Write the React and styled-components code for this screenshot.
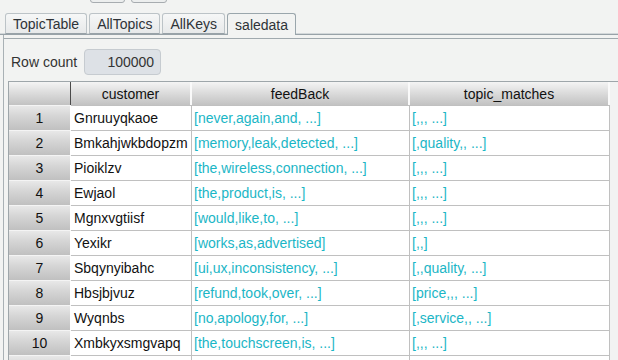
import styled, { createGlobalStyle } from "styled-components"

const GlobalStyle = createGlobalStyle`
  html, body {
    margin: 0;
    background: #f2f3f2;
    font-family: "Liberation Sans", Arial, sans-serif;
    overflow: hidden;
  }
`

const ROWS = [
  ["Gnruuyqkaoe", "[never,again,and, ...]", "[,,, ...]"],
  ["Bmkahjwkbdopzm", "[memory,leak,detected, ...]", "[,quality,, ...]"],
  ["Pioiklzv", "[the,wireless,connection, ...]", "[,,, ...]"],
  ["Ewjaol", "[the,product,is, ...]", "[,,, ...]"],
  ["Mgnxvgtiisf", "[would,like,to, ...]", "[,,, ...]"],
  ["Yexikr", "[works,as,advertised]", "[,,]"],
  ["Sbqynyibahc", "[ui,ux,inconsistency, ...]", "[,,quality, ...]"],
  ["Hbsjbjvuz", "[refund,took,over, ...]", "[price,,, ...]"],
  ["Wyqnbs", "[no,apology,for, ...]", "[,service,, ...]"],
  ["Xmbkyxsmgvapq", "[the,touchscreen,is, ...]", "[,,, ...]"],
]

const TABS = ["TopicTable", "AllTopics", "AllKeys", "saledata"]

const Page = styled.div`
  width: 618px;
  height: 360px;
  overflow: hidden;
  background: #f2f3f2;
`

const Toolbar = styled.div`
  height: 3px;
  overflow: hidden;
  display: flex;
  align-items: flex-end;
  gap: 6px;
  padding-left: 90px;
`

const ToolButton = styled.div`
  flex: none;
  width: ${(p) => p.$w}px;
  height: 20px;
  box-sizing: border-box;
  border: 1px solid #a7acb0;
  border-radius: 3px;
  background: #eceeee;
`

const TabBar = styled.div`
  margin-top: 9px;
  height: 23px;
  box-sizing: border-box;
  display: flex;
  align-items: flex-end;
  gap: 2px;
  padding-left: 5px;
  border-bottom: 1px solid #98a2a8;
  box-shadow: 0 -1px 0 #d3d8da inset;
`

const Tab = styled.div`
  height: ${(p) => (p.$active ? 22 : 21)}px;
  margin-bottom: ${(p) => (p.$active ? -1 : 0)}px;
  box-sizing: border-box;
  padding: 0 7px;
  display: flex;
  align-items: center;
  font-size: 14px;
  color: #2e3338;
  border: 1px solid ${(p) => (p.$active ? "#9aa6ac" : "#bcc3c7")};
  border-bottom: ${(p) => (p.$active ? "none" : "1px solid #98a2a8")};
  border-radius: 3px 3px 0 0;
  background: ${(p) =>
    p.$active ? "#f2f3f2" : "linear-gradient(#f6f7f7, #e7e9ea)"};
`

const Panel = styled.div`
  margin-left: 3px;
  border-left: 1px solid #a9b1b5;
  padding-top: 3px;
`

const PanelBody = styled.div`
  border-top: 1px solid #a0a9ae;
`

const CountRow = styled.div`
  display: flex;
  align-items: center;
  gap: 7px;
  margin-top: 10px;
  padding-left: 7px;
  font-size: 14px;
  color: #333;
`

const CountBox = styled.div`
  width: 77px;
  height: 26px;
  box-sizing: border-box;
  padding-right: 6px;
  display: flex;
  align-items: center;
  justify-content: flex-end;
  border: 1px solid #c6cbd0;
  border-radius: 4px;
  background: #dde1e6;
  color: #333;
`

const ScrollPane = styled.div`
  margin: 6px 0 0 4px;
  border-top: 1px solid #9ea6aa;
  border-left: 1px solid #9ea6aa;
`

const Grid = styled.div`
  display: grid;
  grid-template-columns: 62px 121px 218px 200px;
  grid-auto-rows: 25px;
  grid-template-rows: 23px;
  font-size: 14px;
`

const HeadCell = styled.div`
  display: flex;
  align-items: center;
  justify-content: center;
  color: #111;
  background: linear-gradient(#f4f4f4, #e2e2e2 35%, #c2c2c2);
  border-right: ${(p) => (p.$corner ? "1px solid #4a4a4a" : "2px solid #fafafa")};
  box-sizing: border-box;
`

const RowHead = styled.div`
  display: flex;
  align-items: center;
  justify-content: center;
  color: #111;
  box-sizing: border-box;
  border-top: 1px solid #f4f4f4;
  border-right: 1px solid #ffffff;
  background: linear-gradient(#e8e8e8, #d6d6d6 40%, #c0c0c0);
`

const Cell = styled.div`
  display: flex;
  align-items: center;
  padding-left: ${(p) => (p.$name ? 3 : 2)}px;
  box-sizing: border-box;
  background: #fff;
  border-top: 1px solid #c0c0c0;
  border-right: 1px solid #c0c0c0;
  color: ${(p) => (p.$name ? "#111" : "#1bb6c6")};
  white-space: nowrap;
  overflow: hidden;
`

export default function App() {
  return (
    <Page>
      <GlobalStyle />
      <Toolbar>
        <ToolButton $w={35} />
        <ToolButton $w={36} />
      </Toolbar>
      <TabBar>
        {TABS.map((t) => (
          <Tab key={t} $active={t === "saledata"}>
            {t}
          </Tab>
        ))}
      </TabBar>
      <Panel>
        <PanelBody>
          <CountRow>
            Row count
            <CountBox>100000</CountBox>
          </CountRow>
          <ScrollPane>
            <Grid>
              <HeadCell $corner />
              <HeadCell>customer</HeadCell>
              <HeadCell>feedBack</HeadCell>
              <HeadCell>topic_matches</HeadCell>
              {ROWS.map((r, i) => [
                <RowHead key={`h${i}`}>{i + 1}</RowHead>,
                <Cell key={`c${i}`} $name>{r[0]}</Cell>,
                <Cell key={`f${i}`}>{r[1]}</Cell>,
                <Cell key={`t${i}`}>{r[2]}</Cell>,
              ])}
              {/* next row peeks in under the fold */}
              <RowHead />
              <Cell $name />
              <Cell />
              <Cell />
            </Grid>
          </ScrollPane>
        </PanelBody>
      </Panel>
    </Page>
  )
}
